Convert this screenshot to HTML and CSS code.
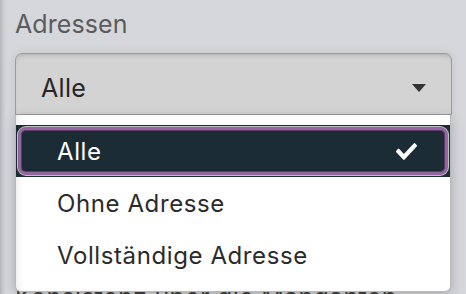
FILE: index.html
```html
<!DOCTYPE html>
<html lang="de">
<head>
<meta charset="utf-8">
<title>Adressen</title>
<link rel="stylesheet" href="styles.css">
</head>
<body>
<div class="page">
  <div class="field-label">Adressen</div>
  <div class="select-wrap">
    <div class="select">
      <span class="select-value">Alle</span>
      <span class="caret"></span>
    </div>
    <ul class="menu">
      <li class="option selected">
        <div class="option-inner">
          <span>Alle</span>
          <svg class="check" viewBox="0 64 512 384" preserveAspectRatio="none" width="21" height="17" aria-hidden="true"><path fill="#fff" d="M173.898 439.404l-166.4-166.4c-9.997-9.997-9.997-26.206 0-36.204l36.203-36.204c9.997-9.998 26.207-9.998 36.204 0L192 312.69 432.095 72.596c9.997-9.997 26.207-9.997 36.204 0l36.203 36.204c9.997 9.997 9.997 26.206 0 36.204l-294.4 294.401c-9.998 9.997-26.207 9.997-36.204-.001z"/></svg>
        </div>
      </li>
      <li class="option">
        <div class="option-inner"><span>Ohne Adresse</span></div>
      </li>
      <li class="option">
        <div class="option-inner"><span>Vollständige Adresse</span></div>
      </li>
    </ul>
  </div>
  <p class="hint">Konsistenz über die Mandanten</p>
</div>
</body>
</html>
```
FILE: styles.css
```css
html, body {
  margin: 0;
  height: 100%;
}
body {
  background: linear-gradient(to right, #b3b4b7 0, #c9cacd 3px, #d6d7da 7px, #d6d7da 100%);
  font-family: Inter, "Noto Sans", "Liberation Sans", sans-serif;
  overflow: hidden;
}
.page {
  padding: 9px 14px 0 15px;
}
.field-label {
  font-size: 25px;
  line-height: 30px;
  color: #5a5b5e;
  letter-spacing: 0.1px;
}
.select-wrap {
  position: relative;
  margin-top: 14px;
}
.select {
  box-sizing: border-box;
  height: 62px;
  border: 1px solid #9c9c9c;
  border-radius: 7px 7px 0 0;
  background: #d3d3d3;
  box-shadow: inset 0 4px 5px -3px rgba(0,0,0,0.18), 0 0 10px rgba(0,0,0,0.08);
  display: flex;
  align-items: center;
  justify-content: space-between;
  padding: 7px 25px 0 25px;
}
.select-value {
  font-size: 25px;
  line-height: 30px;
  color: #262626;
  letter-spacing: 0.3px;
}
.caret {
  width: 0;
  height: 0;
  border-left: 7.5px solid transparent;
  border-right: 7.5px solid transparent;
  border-top: 8px solid #333;
}
.menu {
  position: absolute;
  top: 100%;
  left: 0;
  right: 1px;
  margin: 0;
  padding: 10px 0;
  list-style: none;
  background: #fff;
  border: 1px solid #b9b9b9;
  border-top: none;
  border-radius: 0 0 6px 6px;
  box-shadow: 0 3px 12px rgba(0,0,0,0.22), inset 8px 0 8px -8px rgba(0,0,0,0.12);
  z-index: 2;
}
.option {
  height: 52px;
  box-sizing: border-box;
  padding: 2px;
}
.option-inner {
  box-sizing: border-box;
  height: 48px;
  border: 3px solid transparent;
  border-radius: 8px;
  display: flex;
  align-items: center;
  justify-content: space-between;
  padding: 0 28px 0 36px;
  font-size: 24px;
  letter-spacing: 0.6px;
  color: #2b2b2b;
}
.option.selected {
  background: #1c2c35;
}
.option.selected .option-inner {
  background: #1c2c35;
  border-color: #9466a0;
  box-shadow: inset 0 0 0 1px #5e3a69, 0 0 0 1px rgba(255,255,255,0.7);
  color: #fff;
}
.check {
  display: block;
}
.hint {
  margin: 167px 0 0;
  font-size: 25px;
  line-height: 30px;
  color: #444;
  letter-spacing: 0.3px;
}
```
